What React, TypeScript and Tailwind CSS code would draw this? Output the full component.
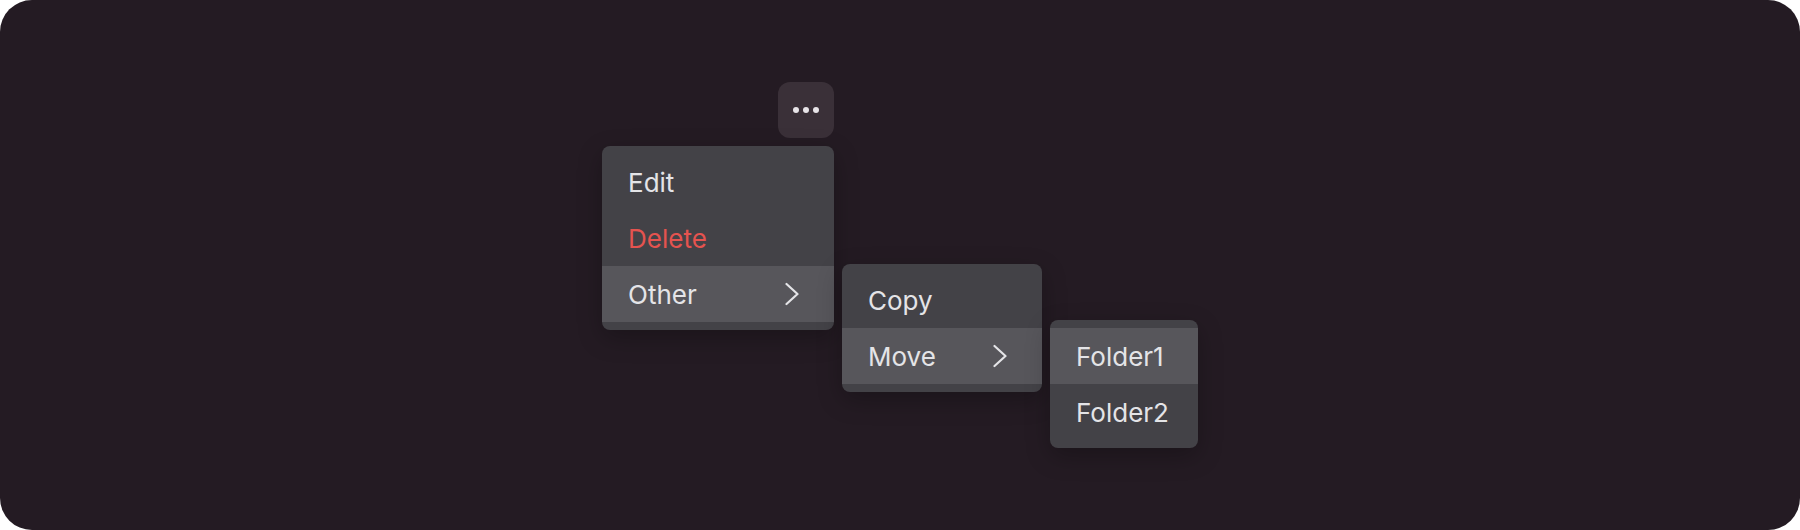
import React from "react";

const font = { fontFamily: "Inter, 'Noto Sans', sans-serif" };

function Chevron() {
  return (
    <svg width="14" height="24" viewBox="0 0 14 24" fill="none" className="shrink-0">
      <polyline points="1.5,2 12.5,12 1.5,22" stroke="#e4e4e7" strokeWidth="2.2" strokeLinecap="round" strokeLinejoin="round" />
    </svg>
  );
}

export default function App() {
  return (
    <div className="w-[1800px] h-[530px] bg-white">
      <div
        className="w-full h-full rounded-[32px] bg-[#241b23] pl-[602px] pt-[82px] text-[26px] text-[#e4e4e7]"
        style={font}
      >
        <div className="flex flex-col items-end w-[232px] gap-2">
          <button className="w-14 h-14 rounded-xl bg-[#3a3038] flex items-center justify-center gap-1">
            <span className="w-1.5 h-1.5 rounded-full bg-[#e8e4e8]" />
            <span className="w-1.5 h-1.5 rounded-full bg-[#e8e4e8]" />
            <span className="w-1.5 h-1.5 rounded-full bg-[#e8e4e8]" />
          </button>

          <div className="w-[232px] rounded-lg bg-[#434247] py-2 shadow-[0_8px_24px_rgba(0,0,0,0.25)]">
            <div className="h-14 pl-[26px] flex items-center">Edit</div>
            <div className="h-14 pl-[26px] flex items-center text-[#e5534f]">Delete</div>
            <div className="relative h-14 pl-[26px] pr-[35px] flex items-center justify-between bg-[#57565b]">
              <span>Other</span>
              <Chevron />

              <div className="absolute left-[calc(100%+8px)] top-[-2px] w-[200px] rounded-lg bg-[#434247] py-2 shadow-[0_8px_24px_rgba(0,0,0,0.25)]">
                <div className="h-14 pl-[26px] flex items-center">Copy</div>
                <div className="relative h-14 pl-[26px] pr-[35px] flex items-center justify-between bg-[#57565b]">
                  <span>Move</span>
                  <Chevron />

                  <div className="absolute left-[calc(100%+8px)] top-[-8px] w-[148px] rounded-lg bg-[#434247] py-2 shadow-[0_8px_24px_rgba(0,0,0,0.25)]">
                    <div className="h-14 pl-[26px] flex items-center bg-[#57565b]">Folder1</div>
                    <div className="h-14 pl-[26px] flex items-center">Folder2</div>
                  </div>
                </div>
              </div>
            </div>
          </div>
        </div>
      </div>
    </div>
  );
}
